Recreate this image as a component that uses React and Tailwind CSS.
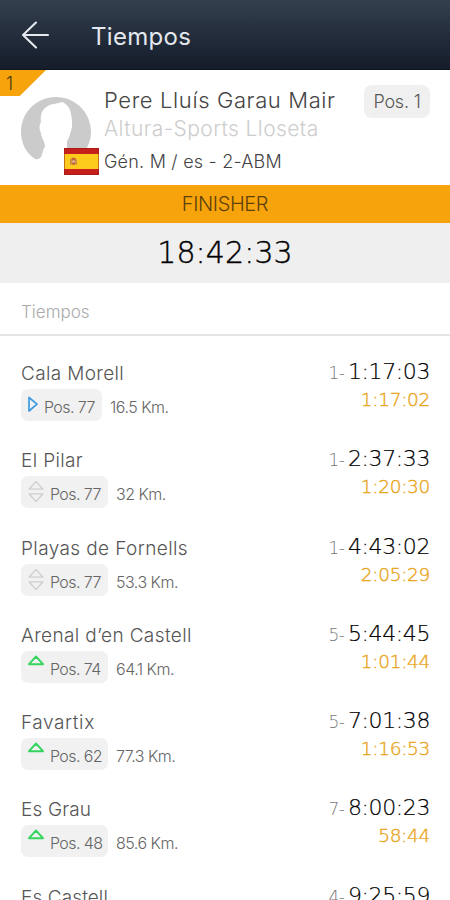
import clsx from 'clsx';

const splits = [
    { name: 'Cala Morell', nameClass: 'tracking-[0.35px]', pos: 77, trend: 'start', km: '16.5', rank: 1, time: '1:17:03', lap: '1:17:02' },
    { name: 'El Pilar', nameClass: 'tracking-[0.35px]', pos: 77, trend: 'same', km: '32', rank: 1, time: '2:37:33', lap: '1:20:30' },
    { name: 'Playas de Fornells', nameClass: 'tracking-[0.4px]', pos: 77, trend: 'same', km: '53.3', rank: 1, time: '4:43:02', lap: '2:05:29' },
    { name: 'Arenal d’en Castell', nameClass: 'tracking-[0.38px]', pos: 74, trend: 'up', km: '64.1', rank: 5, time: '5:44:45', lap: '1:01:44' },
    { name: 'Favartix', nameClass: 'tracking-[0.6px]', pos: 62, trend: 'up', km: '77.3', rank: 5, time: '7:01:38', lap: '1:16:53' },
    { name: 'Es Grau', nameClass: 'tracking-[0.15px]', pos: 48, trend: 'up', km: '85.6', rank: 7, time: '8:00:23', lap: '58:44' },
    { name: 'Es Castell', nameClass: 'tracking-[0.1px]', pos: 41, trend: 'up', km: '100', rank: 4, time: '9:25:59', lap: '1:25:36' },
];

const TrendIcon = ({ trend }) => {
    if (trend === 'start') {
        return (
            <svg className="mt-[7px] h-[17px] w-[10px] shrink-0" viewBox="0 0 10 17" fill="none" stroke="#3d9be0" strokeWidth="1.7" strokeLinejoin="round">
                <path d="M1 1.5V15L9 8.2Z" />
            </svg>
        );
    }

    return (
        <svg
            className="mt-[4px] h-[24px] w-[16px] shrink-0"
            viewBox="0 0 16 24"
            fill="none"
            stroke={trend === 'up' ? '#35d45f' : '#cfcfcf'}
            strokeWidth={trend === 'up' ? 1.9 : 1.3}
            strokeLinejoin="round"
        >
            <path d="M1 9.2L8 1.5L15 9.2Z" />
            {trend === 'same' && <path d="M1 13.8L8 21.5L15 13.8Z" />}
        </svg>
    );
};

const Flag = ({ className }) => (
    <svg className={className} viewBox="0 0 35 27">
        <rect width="35" height="27" fill="#c5201c" />
        <rect y="6" width="35" height="15" fill="#fccb1c" />
        <rect x=".5" y=".5" width="34" height="26" fill="none" stroke="#8d1712" strokeOpacity=".5" />
        <rect x="6" y="11" width="1.2" height="6" fill="#b98a55" />
        <rect x="11.6" y="11" width="1.2" height="6" fill="#b98a55" />
        <path d="M7.5 9.8h4v6q-2 2.6-4 0z" fill="#c4643d" />
        <circle cx="9.5" cy="13.5" r="1.3" fill="#e6c2a0" />
    </svg>
);

const Avatar = () => (
    <div className="relative h-[70px] w-[70px]">
        <svg className="h-[70px] w-[70px]" viewBox="0 0 70 70">
            <path
                d="M14 62C5 56 0 46 0 35C0 15.500 15.500 0 35 0S70 15.500 70 35C70 43 67 50 63 56L46 56V44C48 41 49 38 50 34C52 28 51 23 50 17C49 11 46 7 41 5C38 7 31 6 27 9C21 12 19 18 20 25C18 28 18 33 20 36C20 41 24 44 24 50C21 53 22 57 20 60Q17 63 14 62Z"
                fill="#cbcbcb"
            />
        </svg>
        <Flag className="absolute top-[51px] left-[43px] h-[27px] w-[35px]" />
    </div>
);

const SplitRow = ({ split }) => (
    <li className="flex h-[87.3px] justify-between pr-[20px] pl-[21px]">
        <div>
            <h3 className={clsx('h-[30px] text-[19px] leading-[30px] whitespace-nowrap text-[#555]', split.nameClass)}>{split.name}</h3>
            <div className="flex items-start">
                <div
                    className={clsx(
                        'flex h-[32px] gap-[6px] rounded-[7px] bg-[#f1f1f1] pl-[7px]',
                        split.trend === 'start' ? 'w-[81px]' : 'w-[87px]'
                    )}
                >
                    <TrendIcon trend={split.trend} />
                    <span className="pt-[7px] text-[16px] leading-[22px] tracking-[-0.6px] whitespace-nowrap text-[#666]">Pos. {split.pos}</span>
                </div>
                <span className="ml-[8px] pt-[7px] text-[16px] leading-[22px] tracking-[-0.5px] whitespace-nowrap text-[#666]">{split.km} Km.</span>
            </div>
        </div>
        <div className="flex flex-col items-end font-['DejaVu_Sans'] font-extralight">
            <div className="flex h-[28px] items-baseline leading-[26px]">
                <span className="mr-[4px] text-[17px] tracking-[-0.8px] text-[#777]">{split.rank}-</span>
                <span className="text-[22px] tracking-[-0.4px] text-black [-webkit-text-stroke:0.2px]">{split.time}</span>
            </div>
            <span className="text-[18.500px] leading-[26px] tracking-[-0.3px] text-[#e9a51c] [-webkit-text-stroke:0.4px]">{split.lap}</span>
        </div>
    </li>
);

export default function App() {
    return (
        <div className="h-[900px] w-[450px] overflow-hidden bg-white font-['Inter',sans-serif] font-light">
            <header className="flex h-[70px] items-center border-b border-[#0e1420] bg-linear-to-b from-[#33404e] to-[#151c2a]">
                <svg className="ml-[21px] h-[28px] w-[29px]" viewBox="0 0 29 28" fill="none" stroke="#e4e8ee" strokeWidth="2.100" strokeLinecap="round" strokeLinejoin="round">
                    <path d="M27 14H2M15 1.500L2 14L15 26.500" />
                </svg>
                <h1 className="mt-[4px] ml-[41px] text-[24px] font-normal tracking-[0.3px] text-[#e4e8ee]">Tiempos</h1>
            </header>

            <section className="relative flex h-[115px] pl-[21px]">
                <div className="absolute top-0 left-0 h-[26px] w-[46px] bg-[#f7a30b] pl-[6px] text-[18px] leading-[28px] text-[#4b3a16] [clip-path:polygon(0_0,100%_0,43%_100%,0_100%)]">
                    1
                </div>
                <div className="pt-[27px]">
                    <Avatar />
                </div>
                <div className="ml-[13px] w-[231px] overflow-hidden pt-[15px] whitespace-nowrap">
                    <h2 className="text-[22px] leading-[30px] tracking-[0.62px] text-[#444]">Pere Lluís Garau Mair</h2>
                    <p className="text-[21px] leading-[28px] tracking-[0.42px] text-[#cdcdcd]">Altura-Sports Lloseta</p>
                    <p className="mt-[5px] text-[18px] leading-[28px] tracking-[0.22px] text-[#444]">Gén. M / es - 2-ABM</p>
                </div>
                <div className="mt-[15px] ml-[29px] h-[33px] w-[66px] rounded-[8px] bg-[#f0f0f0] text-center text-[18px] leading-[34px] tracking-[-0.2px] text-[#555]">
                    Pos. 1
                </div>
            </section>

            <div className="h-[38px] bg-[#f7a30b] text-center text-[20px] leading-[38px] tracking-[-0.4px] text-[#5c410e]">FINISHER</div>
            <div className="h-[60px] bg-[#efefef] text-center font-['DejaVu_Sans'] text-[30px] leading-[60px] font-extralight tracking-[0.1px] text-black [-webkit-text-stroke:0.4px]">
                18:42:33
            </div>

            <h2 className="h-[53px] border-b-2 border-[#e5e5e5] pl-[21px] text-[17px] leading-[59px] text-[#aaa]">Tiempos</h2>
            <ul className="pt-[23px]">
                {splits.map((split) => (
                    <SplitRow key={split.name} split={split} />
                ))}
            </ul>
        </div>
    );
}
